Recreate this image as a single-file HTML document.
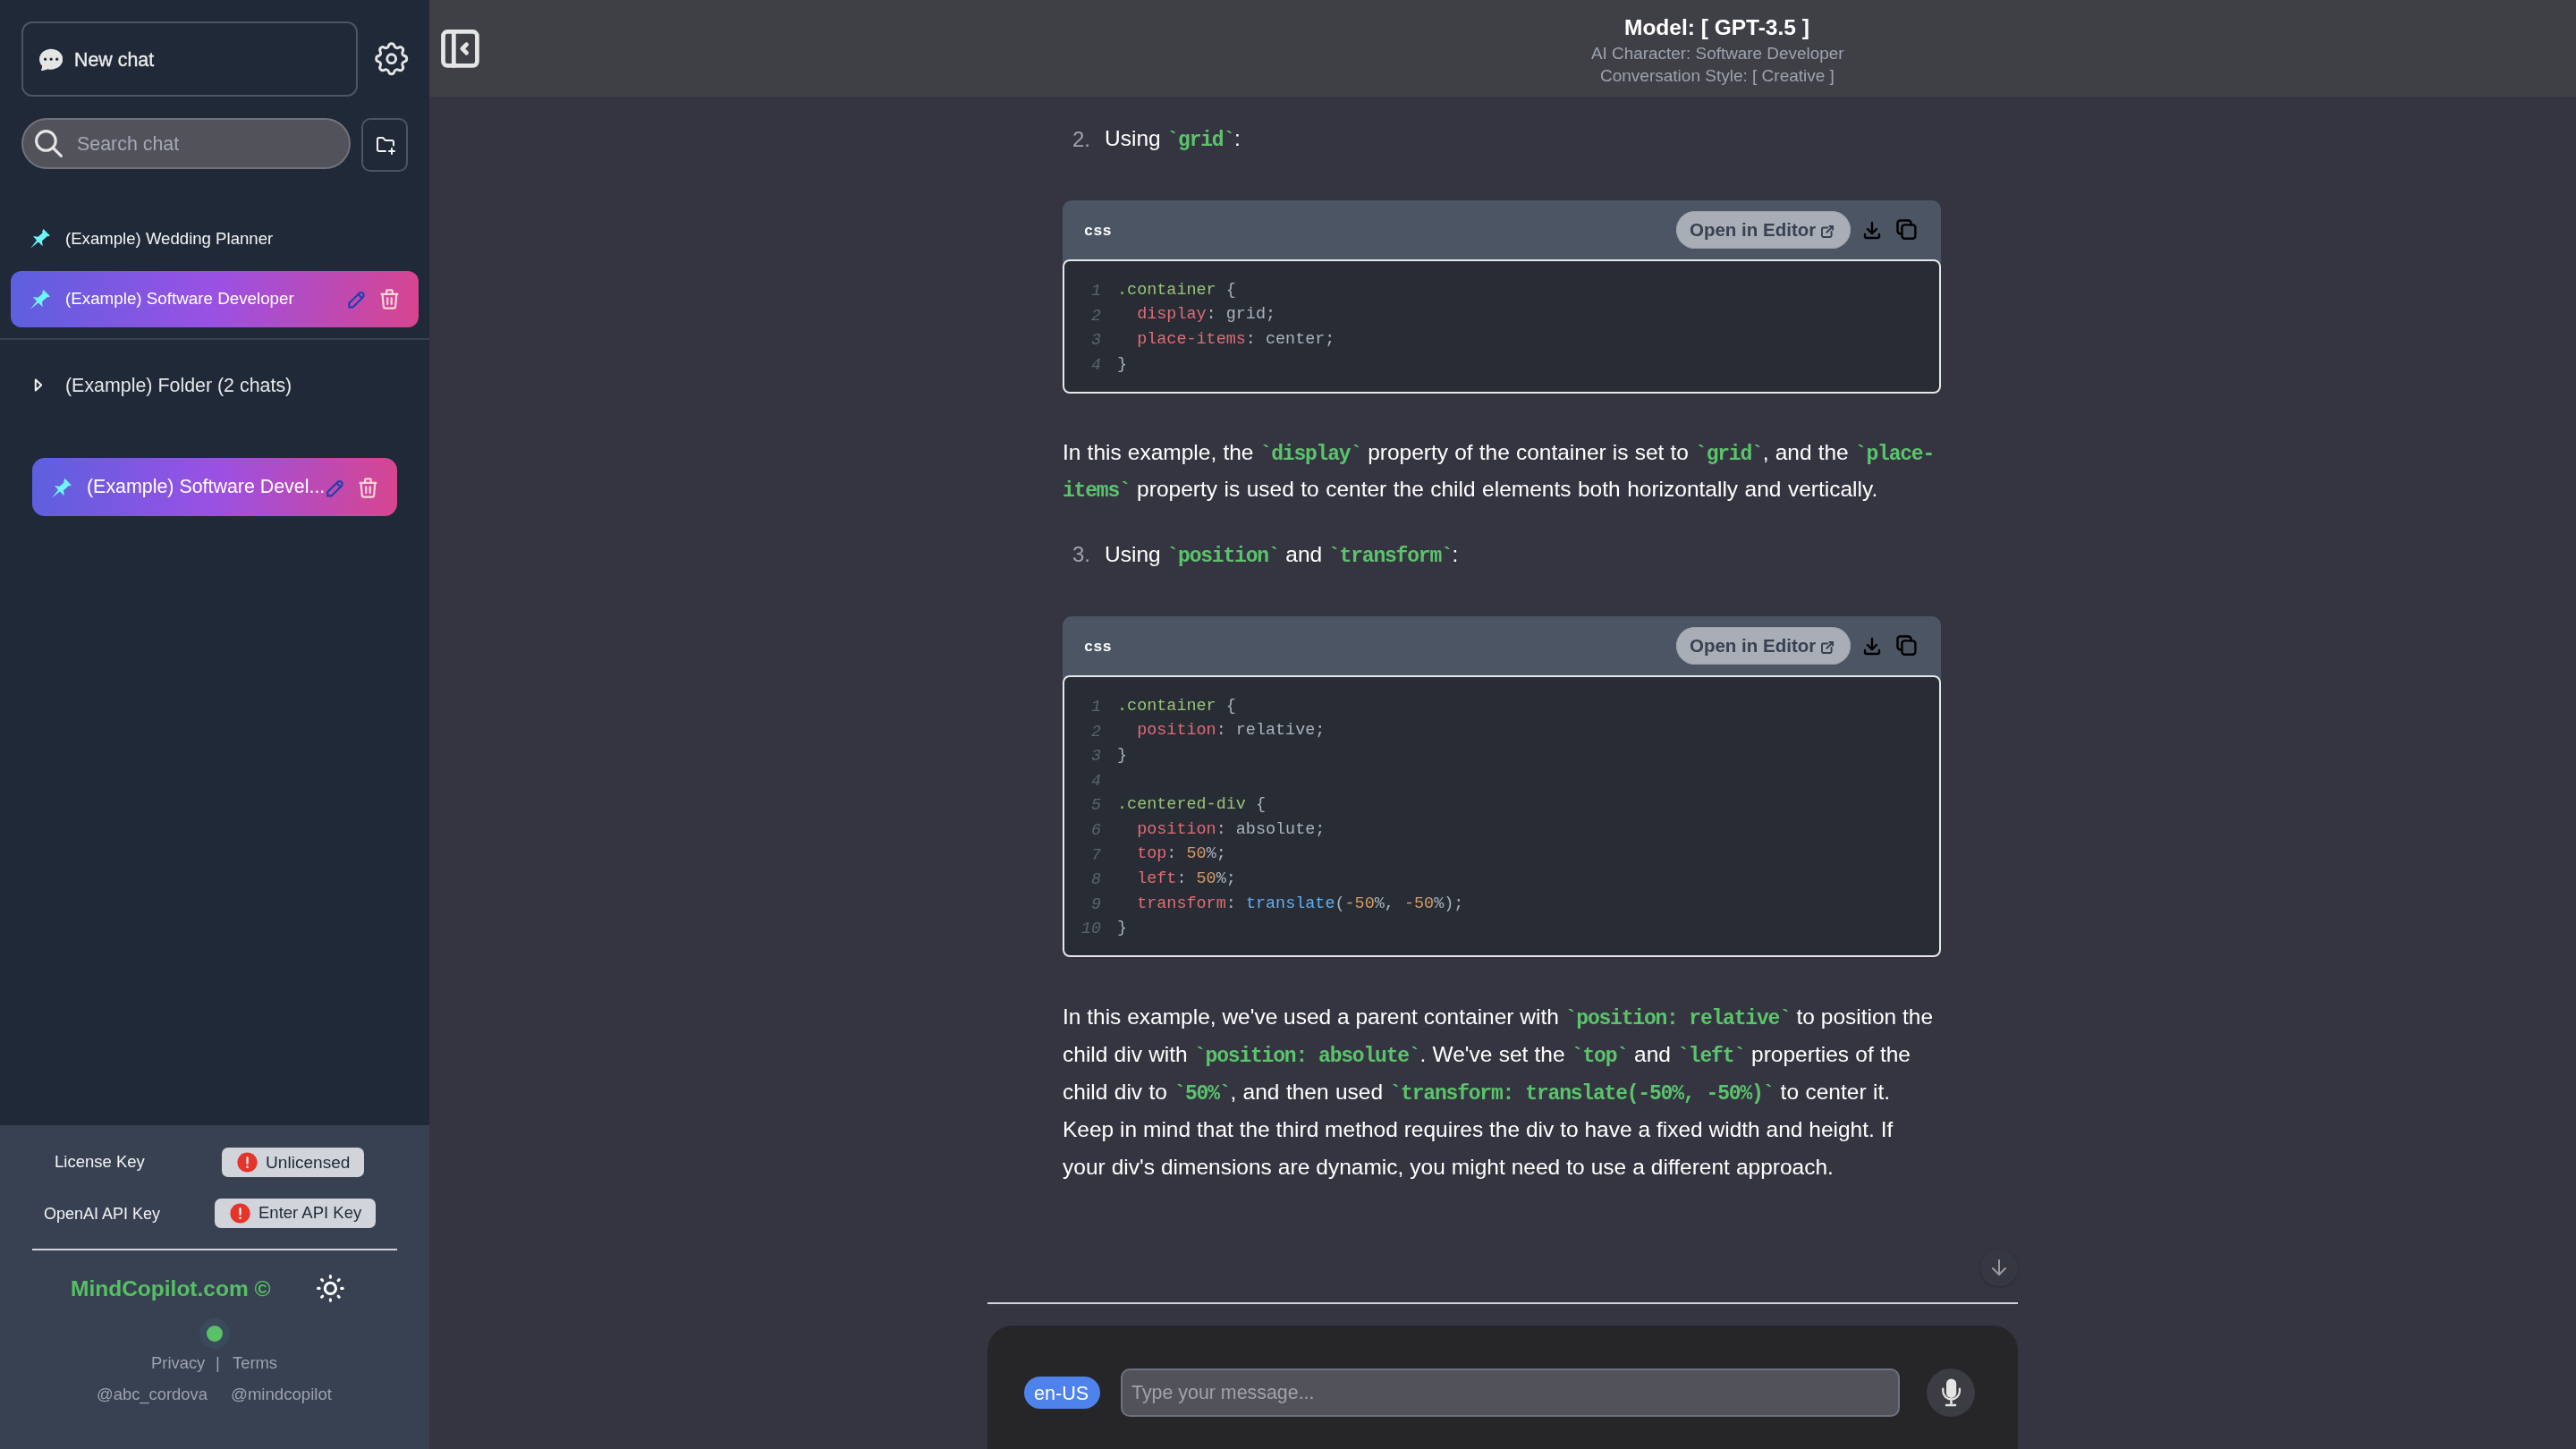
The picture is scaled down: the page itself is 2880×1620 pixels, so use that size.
<!DOCTYPE html>
<html><head><meta charset="utf-8"><style>
html,body{margin:0;padding:0;width:2880px;height:1620px;overflow:hidden;background:#343541}
.r{position:absolute;display:block}
.t{position:absolute;white-space:nowrap;font-family:'Liberation Sans', sans-serif;will-change:transform}
</style></head><body>
<div class="r" style="left:0px;top:0px;width:480px;height:1620px;background:#1f2937"></div>
<div class="r" style="left:0px;top:1258px;width:480px;height:362px;background:#374151"></div>
<div class="r" style="left:24px;top:24px;width:376px;height:83.5px;border:2px solid #4b5563;border-radius:12px;box-sizing:border-box"></div>
<svg class="r" style="left:43.7px;top:53.2px;" width="26.3" height="26.3" viewBox="0 0 16 16" fill="none"><path fill="#e5e5e5" d="M16 8c0 3.866-3.582 7-8 7a9.06 9.06 0 0 1-2.347-.306c-.584.296-1.925.864-4.181 1.234-.2.032-.352-.176-.273-.362.354-.836.674-1.95.77-2.966C.744 11.37 0 9.76 0 8c0-3.866 3.582-7 8-7s8 3.134 8 7zM5 8a1 1 0 1 0-2 0 1 1 0 0 0 2 0zm4 0a1 1 0 1 0-2 0 1 1 0 0 0 2 0zm3 1a1 1 0 1 0 0-2 1 1 0 0 0 0 2z"/></svg>
<div class="t" style="left:83.00px;top:57.08px;font-size:21.4px;line-height:21.4px;color:#ececec;font-weight:400;font-family:'Liberation Sans', sans-serif;-webkit-text-stroke:0.35px #ececec">New chat</div>
<svg class="r" style="left:414.8px;top:43.3px;" width="45.4" height="45.4" viewBox="0 0 24 24" fill="none"><g stroke="#e5e5e5" stroke-width="1.55" stroke-linecap="round" stroke-linejoin="round"><path d="M10.325 4.317c.426 -1.756 2.924 -1.756 3.35 0a1.724 1.724 0 0 0 2.573 1.066c1.543 -.94 3.31 .826 2.37 2.37a1.724 1.724 0 0 0 1.065 2.572c1.756 .426 1.756 2.924 0 3.35a1.724 1.724 0 0 0 -1.066 2.573c.94 1.543 -.826 3.31 -2.37 2.37a1.724 1.724 0 0 0 -2.572 1.065c-.426 1.756 -2.924 1.756 -3.35 0a1.724 1.724 0 0 0 -2.573 -1.066c-1.543 .94 -3.31 -.826 -2.37 -2.37a1.724 1.724 0 0 0 -1.065 -2.572c-1.756 -.426 -1.756 -2.924 0 -3.35a1.724 1.724 0 0 0 1.066 -2.573c-.94 -1.543 .826 -3.31 2.37 -2.37c1 .608 2.296 .07 2.572 -1.065z"/><circle cx="12" cy="12" r="2.6"/></g></svg>
<div class="r" style="left:24px;top:132px;width:368px;height:57px;background:#52525b;border:2px solid #71717a;border-radius:29px;box-sizing:border-box"></div>
<svg class="r" style="left:35.5px;top:142px;" width="37" height="37" viewBox="0 0 24 24" fill="none"><g stroke="#e5e5e5" stroke-width="2" stroke-linecap="round" stroke-linejoin="round"><circle cx="10" cy="10" r="7"/><path d="M21 21l-6 -6"/></g></svg>
<div class="t" style="left:86.00px;top:150.88px;font-size:21.4px;line-height:21.4px;color:#a3a9b6;font-weight:400;font-family:'Liberation Sans', sans-serif;">Search chat</div>
<div class="r" style="left:404px;top:132px;width:51.5px;height:59.5px;border:2px solid #4b5563;border-radius:10px;box-sizing:border-box"></div>
<svg class="r" style="left:418.6px;top:150px;" width="24" height="24" viewBox="0 0 24 24" fill="none"><g stroke="#f3f4f6" stroke-width="2" stroke-linecap="round" stroke-linejoin="round"><path d="M12 19h-7a2 2 0 0 1 -2 -2v-11a2 2 0 0 1 2 -2h4l3 3h7a2 2 0 0 1 2 2v3.5"/><path d="M16 19h6"/><path d="M19 16v6"/></g></svg>
<svg class="r" style="left:20px;top:240px;" width="40" height="40" viewBox="0 0 40 40" fill="none"><path fill="#6ef6f6" d="M28.5 16 L35.9 23.4 L34 24.3 L33 24.1 L27.1 29.2 L27.6 35.2 L22.9 30.6 L14 37.8 L21.1 28.8 L16.9 24.1 L22.6 24.8 L27.6 20.3 L27.2 18.8 Z"/></svg>
<div class="t" style="left:73.00px;top:258.25px;font-size:18.6px;line-height:18.6px;color:#f3f4f6;font-weight:400;font-family:'Liberation Sans', sans-serif;">(Example) Wedding Planner</div>
<div class="r" style="left:12px;top:303px;width:456px;height:63px;background:linear-gradient(95deg,#6366f1 0%,#a855f7 50%,#ec4899 100%);opacity:0.9;border-radius:12px"></div>
<svg class="r" style="left:20px;top:308px;" width="40" height="40" viewBox="0 0 40 40" fill="none"><path fill="#6ef6f6" d="M28.5 16 L35.9 23.4 L34 24.3 L33 24.1 L27.1 29.2 L27.6 35.2 L22.9 30.6 L14 37.8 L21.1 28.8 L16.9 24.1 L22.6 24.8 L27.6 20.3 L27.2 18.8 Z"/></svg>
<div class="t" style="left:73.00px;top:325.08px;font-size:18.8px;line-height:18.8px;color:#ffffff;font-weight:400;font-family:'Liberation Sans', sans-serif;">(Example) Software Developer</div>
<svg class="r" style="left:385.8px;top:322px;" width="25.68" height="25.68" viewBox="0 0 24 24" fill="none"><g stroke="#1e40af" stroke-width="2" stroke-linecap="round" stroke-linejoin="round"><path d="M4 20h4l10.5 -10.5a2.828 2.828 0 1 0 -4 -4l-10.5 10.5v4"/><path d="M13.5 6.5l4 4"/></g></svg>
<svg class="r" style="left:421.5px;top:320.8px;" width="26.880000000000003" height="26.880000000000003" viewBox="0 0 24 24" fill="none"><g stroke="#fbd5d5" stroke-width="2" stroke-linecap="round" stroke-linejoin="round"><path d="M4 7l16 0"/><path d="M10 11l0 6"/><path d="M14 11l0 6"/><path d="M5 7l1 12a2 2 0 0 0 2 2h8a2 2 0 0 0 2 -2l1 -12"/><path d="M9 7v-3a1 1 0 0 1 1 -1h4a1 1 0 0 1 1 1v3"/></g></svg>
<div class="r" style="left:0px;top:378px;width:480px;height:2px;background:#374151"></div>
<svg class="r" style="left:36px;top:420px;" width="14" height="20" viewBox="0 0 14 20" fill="none"><path d="M3.8 4.5 L10.2 10.5 L3.8 16.5 Z" stroke="#f3f4f6" stroke-width="2" stroke-linejoin="round"/></svg>
<div class="t" style="left:73.00px;top:420.88px;font-size:21.4px;line-height:21.4px;color:#e5e7eb;font-weight:400;font-family:'Liberation Sans', sans-serif;">(Example) Folder (2 chats)</div>
<div class="r" style="left:36px;top:511.5px;width:408px;height:65.5px;background:linear-gradient(95deg,#6366f1 0%,#a855f7 50%,#ec4899 100%);opacity:0.9;border-radius:14px"></div>
<svg class="r" style="left:44px;top:518.5px;" width="40" height="40" viewBox="0 0 40 40" fill="none"><path fill="#6ef6f6" d="M28.5 16 L35.9 23.4 L34 24.3 L33 24.1 L27.1 29.2 L27.6 35.2 L22.9 30.6 L14 37.8 L21.1 28.8 L16.9 24.1 L22.6 24.8 L27.6 20.3 L27.2 18.8 Z"/></svg>
<div class="t" style="left:97.00px;top:533.88px;font-size:21.4px;line-height:21.4px;color:#ffffff;font-weight:400;font-family:'Liberation Sans', sans-serif;">(Example) Software Devel...</div>
<svg class="r" style="left:361.8px;top:533px;" width="25.68" height="25.68" viewBox="0 0 24 24" fill="none"><g stroke="#1e40af" stroke-width="2" stroke-linecap="round" stroke-linejoin="round"><path d="M4 20h4l10.5 -10.5a2.828 2.828 0 1 0 -4 -4l-10.5 10.5v4"/><path d="M13.5 6.5l4 4"/></g></svg>
<svg class="r" style="left:397.5px;top:531.5px;" width="26.880000000000003" height="26.880000000000003" viewBox="0 0 24 24" fill="none"><g stroke="#fbd5d5" stroke-width="2" stroke-linecap="round" stroke-linejoin="round"><path d="M4 7l16 0"/><path d="M10 11l0 6"/><path d="M14 11l0 6"/><path d="M5 7l1 12a2 2 0 0 0 2 2h8a2 2 0 0 0 2 -2l1 -12"/><path d="M9 7v-3a1 1 0 0 1 1 -1h4a1 1 0 0 1 1 1v3"/></g></svg>
<div class="t" style="left:61.00px;top:1290.34px;font-size:18.5px;line-height:18.5px;color:#f3f4f6;font-weight:400;font-family:'Liberation Sans', sans-serif;">License Key</div>
<div class="r" style="left:247.5px;top:1282.5px;width:159.5px;height:33px;background:#d1d5db;border-radius:7px"></div>
<svg class="r" style="left:264.5px;top:1287.5px;" width="23" height="23" viewBox="0 0 23 23" fill="none"><circle cx="11.5" cy="11.5" r="11.1" fill="#e5352a"/><rect x="10.4" y="5.2" width="2.2" height="8.6" rx="0.8" fill="#fff"/><rect x="10.4" y="15.6" width="2.2" height="2.2" fill="#fff"/></svg>
<div class="t" style="left:296.80px;top:1289.83px;font-size:19.1px;line-height:19.1px;color:#1f2937;font-weight:400;font-family:'Liberation Sans', sans-serif;">Unlicensed</div>
<div class="t" style="left:49.00px;top:1347.76px;font-size:18px;line-height:18px;color:#f3f4f6;font-weight:400;font-family:'Liberation Sans', sans-serif;">OpenAI API Key</div>
<div class="r" style="left:240px;top:1339.5px;width:180px;height:33px;background:#d1d5db;border-radius:7px"></div>
<svg class="r" style="left:257.0px;top:1344.5px;" width="23" height="23" viewBox="0 0 23 23" fill="none"><circle cx="11.5" cy="11.5" r="11.1" fill="#e5352a"/><rect x="10.4" y="5.2" width="2.2" height="8.6" rx="0.8" fill="#fff"/><rect x="10.4" y="15.6" width="2.2" height="2.2" fill="#fff"/></svg>
<div class="t" style="left:288.90px;top:1347.34px;font-size:18.5px;line-height:18.5px;color:#1f2937;font-weight:400;font-family:'Liberation Sans', sans-serif;">Enter API Key</div>
<div class="r" style="left:36px;top:1396px;width:408px;height:2px;background:#d1d5db"></div>
<div class="t" style="left:78.90px;top:1428.66px;font-size:24.5px;line-height:24.5px;color:#56c064;font-weight:700;font-family:'Liberation Sans', sans-serif;">MindCopilot.com ©</div>
<svg class="r" style="left:350.6px;top:1421.6px;" width="36.8" height="36.8" viewBox="0 0 24 24" fill="none"><g stroke="#ffffff" stroke-width="2" stroke-linecap="round" stroke-linejoin="round"><circle cx="12" cy="12" r="4"/><path d="M3 12h1m8 -9v1m8 8h1m-9 8v1m-6.4 -15.4l.7 .7m12.1 -.7l-.7 .7m0 11.4l.7 .7m-12.1 -.7l-.7 .7"/></g></svg>
<div class="r" style="left:223px;top:1473.5px;width:34px;height:34px;background:#3a4a5c;border-radius:50%"></div>
<div class="r" style="left:231px;top:1481.5px;width:18px;height:18px;background:#5ac167;border-radius:50%"></div>
<div class="t" style="left:169.00px;top:1515.42px;font-size:18.4px;line-height:18.4px;color:#9ca3af;font-weight:400;font-family:'Liberation Sans', sans-serif;">Privacy</div>
<div class="t" style="left:241.00px;top:1515.42px;font-size:18.4px;line-height:18.4px;color:#9ca3af;font-weight:400;font-family:'Liberation Sans', sans-serif;">|</div>
<div class="t" style="left:260.00px;top:1515.42px;font-size:18.4px;line-height:18.4px;color:#9ca3af;font-weight:400;font-family:'Liberation Sans', sans-serif;">Terms</div>
<div class="t" style="left:108.00px;top:1550.42px;font-size:18.4px;line-height:18.4px;color:#9ca3af;font-weight:400;font-family:'Liberation Sans', sans-serif;">@abc_cordova</div>
<div class="t" style="left:257.50px;top:1550.25px;font-size:18.6px;line-height:18.6px;color:#9ca3af;font-weight:400;font-family:'Liberation Sans', sans-serif;">@mindcopilot</div>
<div class="r" style="left:480px;top:0px;width:2400px;height:1620px;background:#343541"></div>
<div class="r" style="left:480px;top:0px;width:2400px;height:108px;background:#3f4046"></div>
<svg class="r" style="left:485.9px;top:25.7px;" width="56.9" height="56.9" viewBox="0 0 24 24" fill="none"><g stroke="#e5e5e5" stroke-width="2" stroke-linecap="round" stroke-linejoin="round"><path d="M4 4m0 2a2 2 0 0 1 2 -2h12a2 2 0 0 1 2 2v12a2 2 0 0 1 -2 2h-12a2 2 0 0 1 -2 -2z"/><path d="M9 4v16"/><path d="M15 10l-2 2l2 2"/></g></svg>
<div class="t" style="left:1816.00px;top:18.76px;font-size:24.5px;line-height:24.5px;color:#ffffff;font-weight:700;font-family:'Liberation Sans', sans-serif;">Model: [ GPT-3.5 ]</div>
<div class="t" style="left:1779.00px;top:51.00px;font-size:18.9px;line-height:18.9px;color:#9ca3af;font-weight:400;font-family:'Liberation Sans', sans-serif;">AI Character: Software Developer</div>
<div class="t" style="left:1789.00px;top:74.91px;font-size:19px;line-height:19px;color:#9ca3af;font-weight:400;font-family:'Liberation Sans', sans-serif;">Conversation Style: [ Creative ]</div>
<div class="t" style="left:1199.00px;top:143.68px;font-size:24px;line-height:24px;color:#9ca3af;font-weight:400;font-family:'Liberation Sans', sans-serif;">2.</div>
<div class="t" style="left:1235.00px;top:143.26px;font-size:24.5px;line-height:24.5px;color:#ffffff;font-weight:400;font-family:'Liberation Sans', sans-serif;">Using <span style="font-family:'Liberation Mono', monospace;font-weight:700;font-size:23px;letter-spacing:-1.2px;color:#5bc46b">`grid`</span>:</div>
<div class="r" style="left:1188px;top:224px;width:982px;height:70px;background:#4b5563;border-radius:10px 10px 0 0"></div>
<div class="t" style="left:1212.00px;top:249.98px;font-size:17px;line-height:17px;color:#ffffff;font-weight:700;font-family:'Liberation Mono', monospace;">css</div>
<div class="r" style="left:1874px;top:235.5px;width:194.6px;height:42.5px;background:#a9adb5;border-radius:22px;box-shadow:inset 0 0 0 1px #9ca0a8"></div>
<div class="t" style="left:1889.00px;top:246.94px;font-size:20.5px;line-height:20.5px;color:#374151;font-weight:700;font-family:'Liberation Sans', sans-serif;">Open in Editor</div>
<svg class="r" style="left:2033.9px;top:249.7px;" width="18.1" height="18.1" viewBox="0 0 24 24" fill="none"><g stroke="#374151" stroke-width="2.6" stroke-linecap="round" stroke-linejoin="round"><path d="M12 6h-6a2 2 0 0 0 -2 2v10a2 2 0 0 0 2 2h10a2 2 0 0 0 2 -2v-6"/><path d="M11 13l9 -9"/><path d="M15 4h5v5"/></g></svg>
<svg class="r" style="left:2080.5px;top:245px;" width="24" height="24" viewBox="0 0 24 24" fill="none"><g stroke="#000" stroke-width="2.4" stroke-linecap="round" stroke-linejoin="round"><path d="M4 17v2a2 2 0 0 0 2 2h12a2 2 0 0 0 2 -2v-2"/><path d="M7 11l5 5l5 -5"/><path d="M12 4l0 12"/></g></svg>
<svg class="r" style="left:2118px;top:244px;" width="28" height="28" viewBox="0 0 28 28" fill="none"><g stroke="#000" stroke-width="2.4" stroke-linecap="round" stroke-linejoin="round"><path d="M18.5 7.4V5.5a3 3 0 0 0 -3 -3H6.5a3 3 0 0 0 -3 3V14.2a3 3 0 0 0 3 3H8.4"/><rect x="8.4" y="7.4" width="15" height="15.3" rx="3"/></g></svg>
<div class="r" style="left:1188px;top:290px;width:982px;height:149.5px;background:#282c34;border:2px solid #e5e7eb;border-radius:8px;box-sizing:border-box"></div>
<div class="t" style="left:1191px;width:40px;text-align:right;top:316.02px;font:italic 18.25px/18.25px 'Liberation Mono', monospace;color:#5c6370">1</div>
<div class="t" style="left:1249.30px;top:315.87px;font-size:18.45px;line-height:18.45px;color:#abb2bf;font-weight:400;font-family:'Liberation Mono', monospace;"><span style="color:#98c379">.container</span> {</div>
<div class="t" style="left:1191px;width:40px;text-align:right;top:343.62px;font:italic 18.25px/18.25px 'Liberation Mono', monospace;color:#5c6370">2</div>
<div class="t" style="left:1249.30px;top:343.47px;font-size:18.45px;line-height:18.45px;color:#abb2bf;font-weight:400;font-family:'Liberation Mono', monospace;">&nbsp;&nbsp;<span style="color:#e06c75">display</span>: grid;</div>
<div class="t" style="left:1191px;width:40px;text-align:right;top:371.22px;font:italic 18.25px/18.25px 'Liberation Mono', monospace;color:#5c6370">3</div>
<div class="t" style="left:1249.30px;top:371.07px;font-size:18.45px;line-height:18.45px;color:#abb2bf;font-weight:400;font-family:'Liberation Mono', monospace;">&nbsp;&nbsp;<span style="color:#e06c75">place-items</span>: center;</div>
<div class="t" style="left:1191px;width:40px;text-align:right;top:398.82px;font:italic 18.25px/18.25px 'Liberation Mono', monospace;color:#5c6370">4</div>
<div class="t" style="left:1249.30px;top:398.67px;font-size:18.45px;line-height:18.45px;color:#abb2bf;font-weight:400;font-family:'Liberation Mono', monospace;">}</div>
<div class="t" style="left:1188.00px;top:493.76px;font-size:24.5px;line-height:24.5px;color:#ffffff;font-weight:400;font-family:'Liberation Sans', sans-serif;white-space:nowrap;word-spacing:0.33px">In this example, the <span style="font-family:'Liberation Mono', monospace;font-weight:700;font-size:23px;letter-spacing:-1.2px;color:#5bc46b">`display`</span> property of the container is set to <span style="font-family:'Liberation Mono', monospace;font-weight:700;font-size:23px;letter-spacing:-1.2px;color:#5bc46b">`grid`</span>, and the <span style="font-family:'Liberation Mono', monospace;font-weight:700;font-size:23px;letter-spacing:-1.2px;color:#5bc46b">`place-</span></div>
<div class="t" style="left:1188.00px;top:535.26px;font-size:24.5px;line-height:24.5px;color:#ffffff;font-weight:400;font-family:'Liberation Sans', sans-serif;white-space:nowrap;word-spacing:0.67px"><span style="font-family:'Liberation Mono', monospace;font-weight:700;font-size:23px;letter-spacing:-1.2px;color:#5bc46b">items`</span> property is used to center the child elements both horizontally and vertically.</div>
<div class="t" style="left:1199.00px;top:608.43px;font-size:24px;line-height:24px;color:#9ca3af;font-weight:400;font-family:'Liberation Sans', sans-serif;">3.</div>
<div class="t" style="left:1235.00px;top:608.01px;font-size:24.5px;line-height:24.5px;color:#ffffff;font-weight:400;font-family:'Liberation Sans', sans-serif;">Using <span style="font-family:'Liberation Mono', monospace;font-weight:700;font-size:23px;letter-spacing:-1.2px;color:#5bc46b">`position`</span> and <span style="font-family:'Liberation Mono', monospace;font-weight:700;font-size:23px;letter-spacing:-1.2px;color:#5bc46b">`transform`</span>:</div>
<div class="r" style="left:1188px;top:689px;width:982px;height:70px;background:#4b5563;border-radius:10px 10px 0 0"></div>
<div class="t" style="left:1212.00px;top:714.98px;font-size:17px;line-height:17px;color:#ffffff;font-weight:700;font-family:'Liberation Mono', monospace;">css</div>
<div class="r" style="left:1874px;top:700.5px;width:194.6px;height:42.5px;background:#a9adb5;border-radius:22px;box-shadow:inset 0 0 0 1px #9ca0a8"></div>
<div class="t" style="left:1889.00px;top:711.94px;font-size:20.5px;line-height:20.5px;color:#374151;font-weight:700;font-family:'Liberation Sans', sans-serif;">Open in Editor</div>
<svg class="r" style="left:2033.9px;top:714.7px;" width="18.1" height="18.1" viewBox="0 0 24 24" fill="none"><g stroke="#374151" stroke-width="2.6" stroke-linecap="round" stroke-linejoin="round"><path d="M12 6h-6a2 2 0 0 0 -2 2v10a2 2 0 0 0 2 2h10a2 2 0 0 0 2 -2v-6"/><path d="M11 13l9 -9"/><path d="M15 4h5v5"/></g></svg>
<svg class="r" style="left:2080.5px;top:710px;" width="24" height="24" viewBox="0 0 24 24" fill="none"><g stroke="#000" stroke-width="2.4" stroke-linecap="round" stroke-linejoin="round"><path d="M4 17v2a2 2 0 0 0 2 2h12a2 2 0 0 0 2 -2v-2"/><path d="M7 11l5 5l5 -5"/><path d="M12 4l0 12"/></g></svg>
<svg class="r" style="left:2118px;top:709px;" width="28" height="28" viewBox="0 0 28 28" fill="none"><g stroke="#000" stroke-width="2.4" stroke-linecap="round" stroke-linejoin="round"><path d="M18.5 7.4V5.5a3 3 0 0 0 -3 -3H6.5a3 3 0 0 0 -3 3V14.2a3 3 0 0 0 3 3H8.4"/><rect x="8.4" y="7.4" width="15" height="15.3" rx="3"/></g></svg>
<div class="r" style="left:1188px;top:755px;width:982px;height:315px;background:#282c34;border:2px solid #e5e7eb;border-radius:8px;box-sizing:border-box"></div>
<div class="t" style="left:1191px;width:40px;text-align:right;top:781.02px;font:italic 18.25px/18.25px 'Liberation Mono', monospace;color:#5c6370">1</div>
<div class="t" style="left:1249.30px;top:780.87px;font-size:18.45px;line-height:18.45px;color:#abb2bf;font-weight:400;font-family:'Liberation Mono', monospace;"><span style="color:#98c379">.container</span> {</div>
<div class="t" style="left:1191px;width:40px;text-align:right;top:808.62px;font:italic 18.25px/18.25px 'Liberation Mono', monospace;color:#5c6370">2</div>
<div class="t" style="left:1249.30px;top:808.47px;font-size:18.45px;line-height:18.45px;color:#abb2bf;font-weight:400;font-family:'Liberation Mono', monospace;">&nbsp;&nbsp;<span style="color:#e06c75">position</span>: relative;</div>
<div class="t" style="left:1191px;width:40px;text-align:right;top:836.22px;font:italic 18.25px/18.25px 'Liberation Mono', monospace;color:#5c6370">3</div>
<div class="t" style="left:1249.30px;top:836.07px;font-size:18.45px;line-height:18.45px;color:#abb2bf;font-weight:400;font-family:'Liberation Mono', monospace;">}</div>
<div class="t" style="left:1191px;width:40px;text-align:right;top:863.82px;font:italic 18.25px/18.25px 'Liberation Mono', monospace;color:#5c6370">4</div>
<div class="t" style="left:1249.30px;top:863.67px;font-size:18.45px;line-height:18.45px;color:#abb2bf;font-weight:400;font-family:'Liberation Mono', monospace;"></div>
<div class="t" style="left:1191px;width:40px;text-align:right;top:891.42px;font:italic 18.25px/18.25px 'Liberation Mono', monospace;color:#5c6370">5</div>
<div class="t" style="left:1249.30px;top:891.27px;font-size:18.45px;line-height:18.45px;color:#abb2bf;font-weight:400;font-family:'Liberation Mono', monospace;"><span style="color:#98c379">.centered-div</span> {</div>
<div class="t" style="left:1191px;width:40px;text-align:right;top:919.02px;font:italic 18.25px/18.25px 'Liberation Mono', monospace;color:#5c6370">6</div>
<div class="t" style="left:1249.30px;top:918.87px;font-size:18.45px;line-height:18.45px;color:#abb2bf;font-weight:400;font-family:'Liberation Mono', monospace;">&nbsp;&nbsp;<span style="color:#e06c75">position</span>: absolute;</div>
<div class="t" style="left:1191px;width:40px;text-align:right;top:946.62px;font:italic 18.25px/18.25px 'Liberation Mono', monospace;color:#5c6370">7</div>
<div class="t" style="left:1249.30px;top:946.47px;font-size:18.45px;line-height:18.45px;color:#abb2bf;font-weight:400;font-family:'Liberation Mono', monospace;">&nbsp;&nbsp;<span style="color:#e06c75">top</span>: <span style="color:#d19a66">50</span>%;</div>
<div class="t" style="left:1191px;width:40px;text-align:right;top:974.22px;font:italic 18.25px/18.25px 'Liberation Mono', monospace;color:#5c6370">8</div>
<div class="t" style="left:1249.30px;top:974.07px;font-size:18.45px;line-height:18.45px;color:#abb2bf;font-weight:400;font-family:'Liberation Mono', monospace;">&nbsp;&nbsp;<span style="color:#e06c75">left</span>: <span style="color:#d19a66">50</span>%;</div>
<div class="t" style="left:1191px;width:40px;text-align:right;top:1001.82px;font:italic 18.25px/18.25px 'Liberation Mono', monospace;color:#5c6370">9</div>
<div class="t" style="left:1249.30px;top:1001.67px;font-size:18.45px;line-height:18.45px;color:#abb2bf;font-weight:400;font-family:'Liberation Mono', monospace;">&nbsp;&nbsp;<span style="color:#e06c75">transform</span>: <span style="color:#61aeee">translate</span>(<span style="color:#d19a66">-50</span>%, <span style="color:#d19a66">-50</span>%);</div>
<div class="t" style="left:1191px;width:40px;text-align:right;top:1029.42px;font:italic 18.25px/18.25px 'Liberation Mono', monospace;color:#5c6370">10</div>
<div class="t" style="left:1249.30px;top:1029.27px;font-size:18.45px;line-height:18.45px;color:#abb2bf;font-weight:400;font-family:'Liberation Mono', monospace;">}</div>
<div class="t" style="left:1188.00px;top:1125.01px;font-size:24.5px;line-height:24.5px;color:#ffffff;font-weight:400;font-family:'Liberation Sans', sans-serif;white-space:nowrap;word-spacing:0px">In this example, we've used a parent container with <span style="font-family:'Liberation Mono', monospace;font-weight:700;font-size:23px;letter-spacing:-1.2px;color:#5bc46b">`position: relative`</span> to position the</div>
<div class="t" style="left:1188.00px;top:1166.91px;font-size:24.5px;line-height:24.5px;color:#ffffff;font-weight:400;font-family:'Liberation Sans', sans-serif;white-space:nowrap;word-spacing:0.43px">child div with <span style="font-family:'Liberation Mono', monospace;font-weight:700;font-size:23px;letter-spacing:-1.2px;color:#5bc46b">`position: absolute`</span>. We've set the <span style="font-family:'Liberation Mono', monospace;font-weight:700;font-size:23px;letter-spacing:-1.2px;color:#5bc46b">`top`</span> and <span style="font-family:'Liberation Mono', monospace;font-weight:700;font-size:23px;letter-spacing:-1.2px;color:#5bc46b">`left`</span> properties of the</div>
<div class="t" style="left:1188.00px;top:1208.81px;font-size:24.5px;line-height:24.5px;color:#ffffff;font-weight:400;font-family:'Liberation Sans', sans-serif;white-space:nowrap;word-spacing:0.6px">child div to <span style="font-family:'Liberation Mono', monospace;font-weight:700;font-size:23px;letter-spacing:-1.2px;color:#5bc46b">`50%`</span>, and then used <span style="font-family:'Liberation Mono', monospace;font-weight:700;font-size:23px;letter-spacing:-1.2px;color:#5bc46b">`transform: translate(-50%, -50%)`</span> to center it.</div>
<div class="t" style="left:1188.00px;top:1250.71px;font-size:24.5px;line-height:24.5px;color:#ffffff;font-weight:400;font-family:'Liberation Sans', sans-serif;white-space:nowrap;word-spacing:0.05px">Keep in mind that the third method requires the div to have a fixed width and height. If</div>
<div class="t" style="left:1188.00px;top:1292.61px;font-size:24.5px;line-height:24.5px;color:#ffffff;font-weight:400;font-family:'Liberation Sans', sans-serif;white-space:nowrap;word-spacing:0.2px">your div's dimensions are dynamic, you might need to use a different approach.</div>
<div class="r" style="left:2214.25px;top:1396.85px;width:41.5px;height:41.5px;background:#353843;border-radius:50%;box-shadow:0 1px 3px rgba(0,0,0,.25)"></div>
<svg class="r" style="left:2223px;top:1405px;" width="24" height="24" viewBox="0 0 24 24" fill="none"><g stroke="#9a9a9a" stroke-width="2" stroke-linecap="round" stroke-linejoin="round"><path d="M12 4v16"/><path d="M5 13l7 7l7 -7"/></g></svg>
<div class="r" style="left:1104px;top:1456px;width:1152px;height:2px;background:#d4d4d8"></div>
<div class="r" style="left:1104px;top:1482px;width:1152px;height:160px;background:#262628;border-radius:28px 28px 0 0"></div>
<div class="r" style="left:1144.5px;top:1539px;width:85.5px;height:36px;background:#4f83ec;border-radius:18px"></div>
<div class="t" style="left:1156.00px;top:1546.71px;font-size:21.6px;line-height:21.6px;color:#ffffff;font-weight:400;font-family:'Liberation Sans', sans-serif;">en-US</div>
<div class="r" style="left:1252.5px;top:1530px;width:871.5px;height:53.75px;background:#52525b;border:2px solid #6b7280;border-radius:10px;box-sizing:border-box"></div>
<div class="t" style="left:1265.00px;top:1546.88px;font-size:21.4px;line-height:21.4px;color:#a1a1aa;font-weight:400;font-family:'Liberation Sans', sans-serif;">Type your message...</div>
<div class="r" style="left:2154px;top:1530px;width:54px;height:54px;background:#3c3d42;border-radius:50%"></div>
<svg class="r" style="left:2166px;top:1538px;" width="30" height="36" viewBox="0 0 30 36" fill="none"><rect x="10" y="3.5" width="11.2" height="21.5" rx="5.6" fill="#e5e5e5"/><path d="M6.3 14.7v2.5a9.3 9.3 0 0 0 18.6 0v-2.5" stroke="#e5e5e5" stroke-width="2.3" stroke-linecap="round"/><path d="M15.5 27.3v4.5" stroke="#e5e5e5" stroke-width="2.6"/><rect x="8.9" y="31.7" width="12.3" height="2.6" rx="1" fill="#e5e5e5"/></svg>
</body></html>
